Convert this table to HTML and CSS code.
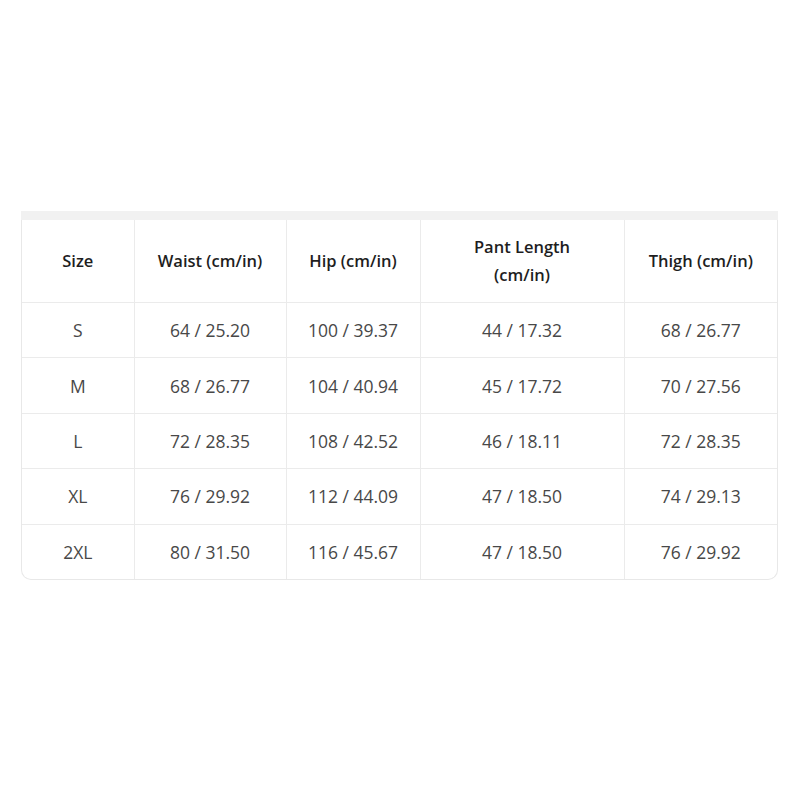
FILE: index.html
```html
<!DOCTYPE html>
<html>
<head>
<meta charset="utf-8">
<link rel="stylesheet" href="styles.css">
</head>
<body>
<div class="page">
  <div class="band"></div>
  <div class="card">
    <table class="sizes">
      <colgroup>
        <col class="c1"><col class="c2"><col class="c3"><col class="c4"><col class="c5">
      </colgroup>
      <thead>
        <tr><th>Size</th><th>Waist (cm/in)</th><th>Hip (cm/in)</th><th>Pant Length<br>(cm/in)</th><th>Thigh (cm/in)</th></tr>
      </thead>
      <tbody>
        <tr><td>S</td><td>64 / 25.20</td><td>100 / 39.37</td><td>44 / 17.32</td><td>68 / 26.77</td></tr>
        <tr><td>M</td><td>68 / 26.77</td><td>104 / 40.94</td><td>45 / 17.72</td><td>70 / 27.56</td></tr>
        <tr><td>L</td><td>72 / 28.35</td><td>108 / 42.52</td><td>46 / 18.11</td><td>72 / 28.35</td></tr>
        <tr><td>XL</td><td>76 / 29.92</td><td>112 / 44.09</td><td>47 / 18.50</td><td>74 / 29.13</td></tr>
        <tr><td>2XL</td><td>80 / 31.50</td><td>116 / 45.67</td><td>47 / 18.50</td><td>76 / 29.92</td></tr>
      </tbody>
    </table>
  </div>
</div>
</body>
</html>
```

FILE: styles.css
```css
html, body {
  margin: 0;
  padding: 0;
  background: #ffffff;
}
.page {
  padding: 211px 0 0 21px;
  width: 757px;
  font-family: "Open Sans", "Noto Sans", sans-serif;
}
.band {
  height: 9px;
  background: #f1f1f1;
}
.card {
  border: 1px solid #e8e8e8;
  border-top: none;
  border-radius: 0 0 10px 10px;
  overflow: hidden;
}
.sizes {
  width: 100%;
  border-collapse: collapse;
  table-layout: fixed;
}
.c1 { width: 112px; }
.c2 { width: 152px; }
.c3 { width: 134px; }
.c4 { width: 204px; }
.c5 { width: auto; }
.sizes th, .sizes td {
  border: 1px solid #ebebeb;
  text-align: center;
  padding: 0;
}
.sizes tr > :first-child { border-left: none; }
.sizes tr > :last-child { border-right: none; }
.sizes tbody tr:last-child td { border-bottom: none; }
.sizes th {
  height: 82px;
  font-size: 16.5px;
  font-weight: 600;
  color: #1e1e1e;
  line-height: 28px;
  border-top: none;
}
.sizes td {
  height: 54.4px;
  font-size: 17.5px;
  color: #484848;
}
```
